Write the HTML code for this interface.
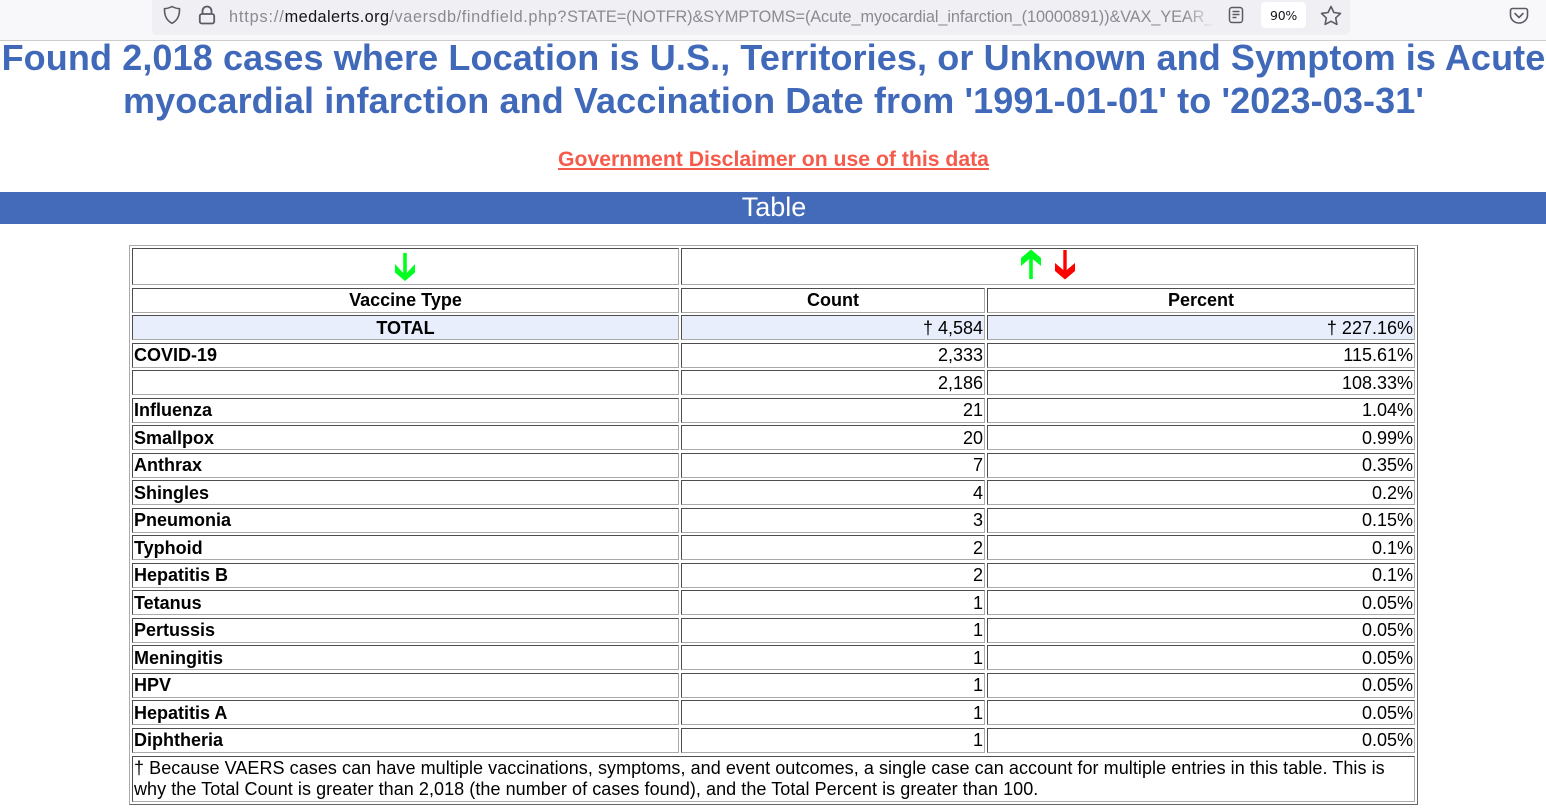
<!DOCTYPE html>
<html><head><meta charset="utf-8"><style>
html,body{margin:0;padding:0;background:#fff;width:1546px;height:808px;overflow:hidden;font-family:"Liberation Sans",Arial,sans-serif;color:#000}
.a{position:absolute;white-space:nowrap}
.c{position:absolute;box-sizing:border-box;height:25px;border:1px solid;border-color:#4d4d4d #aaa #aaa #4d4d4d;font-size:18px;line-height:23px;padding:0 1px;white-space:nowrap;background:#fff}
.k{left:132px;width:547px}.n{left:681px;width:304px;text-align:right}.p{left:987px;width:428px;text-align:right}
.b{font-weight:bold}.m{text-align:center}.t{background:#e8eefb}.d{line-height:25px}
svg{position:absolute;overflow:visible}
</style></head><body>
<div class="a" style="left:0;top:0;width:1546px;height:40px;background:#f8f8fb"></div>
<div class="a" style="left:0;top:40px;width:1546px;height:1px;background:#ccc"></div>
<div class="a" style="left:152px;top:0;width:1198px;height:35px;background:#f0f0f4;border-radius:0 0 5px 5px"></div>
<svg style="left:163px;top:5px" width="18" height="20" fill="none" stroke="#5b5b66" stroke-width="1.6"><path d="M9 1.5C6.5 3 4 3.5 1.5 3.7 1.3 10 3.5 15.5 9 18.3 14.500 15.500 16.700 10 16.500 3.700 14 3.500 11.500 3 9 1.500Z"/></svg>
<svg style="left:198px;top:5px" width="18" height="20" fill="none" stroke="#5b5b66" stroke-width="1.8"><path d="M4.500 9V6a4.500 4.500 0 0 1 9 0v3"/><rect x="1.800" y="9" width="14.400" height="9.500" rx="2"/></svg>
<div class="a" style="left:229px;top:7px;width:986px;overflow:hidden;font-size:16.300px;line-height:20px;color:#8a8a92"><span style="letter-spacing:.85px">https://</span><span style="color:#15141a;letter-spacing:.4px">medalerts.org</span><span style="letter-spacing:.6px">/vaersdb/findfield.php?</span><span style="letter-spacing:-.08px">STATE=(NOTFR)&amp;SYMPTOMS=(Acute_myocardial_infarction_(10000891))&amp;VAX_YEAR_</span></div>
<div class="a" style="left:1185px;top:0;width:30px;height:35px;background:linear-gradient(90deg,rgba(240,240,244,0),#f0f0f4)"></div>
<svg style="left:1228px;top:6px" width="16" height="18" fill="none" stroke="#5b5b66" stroke-width="1.500"><rect x="1.500" y="1.500" width="13" height="15" rx="2.500"/><path d="M4.500 5.500h7M4.500 8.500h7M4.500 11.500h4"/></svg>
<div class="a" style="left:1261px;top:2px;width:45px;height:26px;background:#fff;border-radius:4px;text-align:center;font-family:'DejaVu Sans',sans-serif;font-size:12.500px;line-height:27px;letter-spacing:-.3px;color:#15141a">90%</div>
<svg style="left:1320px;top:5px" width="22" height="20" fill="none" stroke="#5b5b66" stroke-width="1.600" stroke-linejoin="round"><path d="M11 1.500l2.900 6 6.600.9-4.800 4.500 1.200 6.500L11 16.300 5.100 19.400l1.200-6.500L1.500 8.400l6.600-.9z"/></svg>
<svg style="left:1509px;top:7px" width="20" height="18" fill="none" stroke="#5b5b66" stroke-width="1.600" stroke-linejoin="round" stroke-linecap="round"><path d="M3.500 1.500h13a2 2 0 0 1 2 2V8a8.500 8 0 0 1-17 0V3.500a2 2 0 0 1 2-2z"/><path d="M6 6.500l4 4 4-4"/></svg>

<div class="a" style="left:0;width:1547px;top:36px;text-align:center;font-size:36px;letter-spacing:.11px;font-weight:bold;line-height:43px;color:#4169b9">Found 2,018 cases where Location is U.S., Territories, or Unknown and Symptom is Acute<br>myocardial infarction and Vaccination Date from '1991-01-01' to '2023-03-31'</div>
<div class="a" style="left:0;width:1547px;top:148px;text-align:center;font-size:21.200px;font-weight:bold;line-height:24px;color:#f55a4a"><span style="text-decoration:underline">Government Disclaimer on use of this data</span></div>
<div class="a" style="left:0;top:192px;width:1546px;height:32px;background:#436bb9"></div>
<div class="a" style="left:1px;top:192px;width:1546px;color:#fff;text-align:center;font-size:27px;line-height:31px">Table</div>

<div class="a" style="box-sizing:border-box;left:129px;top:245px;width:1289px;height:560px;border:1px solid;border-color:#aaa #666 #666 #aaa"></div>
<div class="c" style="left:132px;top:248px;width:547px;height:37px"></div>
<div class="c" style="left:681px;top:248px;width:734px;height:37px"></div>
<svg style="left:394px;top:252px" width="22" height="30"><path d="M9.200 1h3.600v20L21 12v8.500L11 29 1 20.500V12l8.200 9z" fill="#00ff1e"/></svg>
<svg style="left:1020px;top:250px" width="22" height="30"><path d="M9.200 29h3.600V9L21 16V8L11-.5 1 8v8l8.200-7z" fill="#00ff1e"/></svg>
<svg style="left:1054px;top:250px" width="22" height="30"><path d="M9.300 0h3.400v20L21 13v8L11 29.500 1 21v-8l8.300 7z" fill="#ff0000"/></svg>

<div class="c k b m" style="top:288px">Vaccine Type</div><div class="c n b m" style="top:288px;text-align:center">Count</div><div class="c p b m" style="top:288px;text-align:center">Percent</div>
<div class="c k b m t d" style="top:315px">TOTAL</div><div class="c n t d" style="top:315px">† 4,584</div><div class="c p t d" style="top:315px">† 227.16%</div>
<div class="c k b" style="top:343px">COVID-19</div><div class="c n" style="top:343px">2,333</div><div class="c p" style="top:343px">115.61%</div>
<div class="c k b d" style="top:370px"></div><div class="c n d" style="top:370px">2,186</div><div class="c p d" style="top:370px">108.33%</div>
<div class="c k b" style="top:398px">Influenza</div><div class="c n" style="top:398px">21</div><div class="c p" style="top:398px">1.04%</div>
<div class="c k b d" style="top:425px">Smallpox</div><div class="c n d" style="top:425px">20</div><div class="c p d" style="top:425px">0.99%</div>
<div class="c k b" style="top:453px">Anthrax</div><div class="c n" style="top:453px">7</div><div class="c p" style="top:453px">0.35%</div>
<div class="c k b d" style="top:480px">Shingles</div><div class="c n d" style="top:480px">4</div><div class="c p d" style="top:480px">0.2%</div>
<div class="c k b" style="top:508px">Pneumonia</div><div class="c n" style="top:508px">3</div><div class="c p" style="top:508px">0.15%</div>
<div class="c k b d" style="top:535px">Typhoid</div><div class="c n d" style="top:535px">2</div><div class="c p d" style="top:535px">0.1%</div>
<div class="c k b" style="top:563px">Hepatitis B</div><div class="c n" style="top:563px">2</div><div class="c p" style="top:563px">0.1%</div>
<div class="c k b d" style="top:590px">Tetanus</div><div class="c n d" style="top:590px">1</div><div class="c p d" style="top:590px">0.05%</div>
<div class="c k b" style="top:618px">Pertussis</div><div class="c n" style="top:618px">1</div><div class="c p" style="top:618px">0.05%</div>
<div class="c k b d" style="top:645px">Meningitis</div><div class="c n d" style="top:645px">1</div><div class="c p d" style="top:645px">0.05%</div>
<div class="c k b" style="top:673px">HPV</div><div class="c n" style="top:673px">1</div><div class="c p" style="top:673px">0.05%</div>
<div class="c k b d" style="top:700px">Hepatitis A</div><div class="c n d" style="top:700px">1</div><div class="c p d" style="top:700px">0.05%</div>
<div class="c k b" style="top:728px">Diphtheria</div><div class="c n" style="top:728px">1</div><div class="c p" style="top:728px">0.05%</div>
<div class="c" style="left:132px;top:756px;width:1283px;height:46px;line-height:21px;padding-top:1px;letter-spacing:.057px">† Because VAERS cases can have multiple vaccinations, symptoms, and event outcomes, a single case can account for multiple entries in this table. This is<br>why the Total Count is greater than 2,018 (the number of cases found), and the Total Percent is greater than 100.</div>
</body></html>
